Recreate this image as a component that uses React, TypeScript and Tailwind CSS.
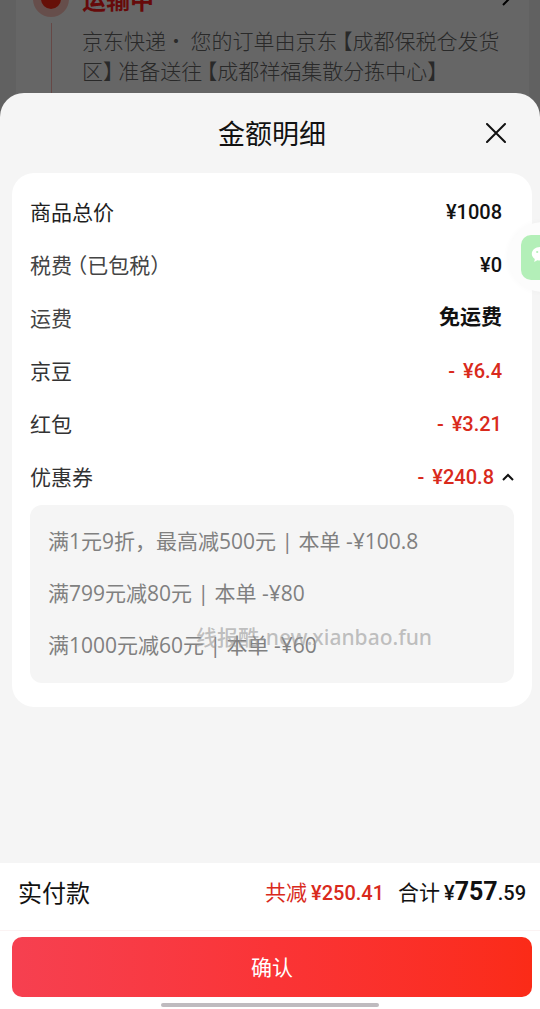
import React, { useState } from 'react';

interface PriceRow {
  label: string;
  value: string;
  discount?: boolean;
  labelClass: string;
  valueClass: string;
}

const NUM_FONT = "font-['Roboto','Noto_Sans_CJK_SC',sans-serif]";

const rows: PriceRow[] = [
  { label: '商品总价', value: '¥1008', labelClass: 'text-[#1f1f1f]', valueClass: 'text-xl font-medium text-[#111111]' },
  { label: '税费 （已包税）', value: '¥0', labelClass: 'text-[#444444]', valueClass: 'text-xl font-medium text-[#111111]' },
  { label: '运费', value: '免运费', labelClass: 'text-[#444444]', valueClass: 'text-[21px] font-bold text-[#111111]' },
  { label: '京豆', value: '¥6.4', discount: true, labelClass: 'text-[#333333]', valueClass: 'text-xl font-medium text-[#d92a1c]' },
  { label: '红包', value: '¥3.21', discount: true, labelClass: 'text-[#333333]', valueClass: 'text-xl font-medium text-[#d92a1c]' },
];

const coupons: string[] = [
  '满1元9折，最高减500元 | 本单 -¥100.8',
  '满799元减80元 | 本单 -¥80',
  '满1000元减60元 | 本单 -¥60',
];

// Order page behind the sheet
const ShippingStatus: React.FC = () => (
  <div className="relative bg-[#f3f3f3] pl-4 pr-[11px]">
    <div className="flex bg-white pl-[17px] pr-4">
      <div className="flex w-9 shrink-0 flex-col items-center">
        <span className="-mt-[19px] flex size-9 shrink-0 items-center justify-center rounded-full bg-[#ffc4bb]">
          <span className="size-5 rounded-full bg-[#ff2a14]" />
        </span>
        <span className="mt-1.5 w-px flex-1 bg-[#ffb5b0]" />
      </div>
      <div className="-mt-[17px] flex-1 pb-8 pl-[13px]">
        <div className="flex items-center justify-between">
          <h2 className="text-2xl leading-8 font-bold text-[#ff1a1a]">运输中</h2>
          <svg width="8" height="14" viewBox="0 0 8 14" fill="none" stroke="#000" strokeWidth="2" className="mr-[3px]">
            <path d="M1 1l6 6-6 6" />
          </svg>
        </div>
        <p className="mt-[10px] text-[21px] leading-[30px] font-light text-[#666666] [font-feature-settings:'halt']">
          京东快递 ·&nbsp; 您的订单由京东 【成都保税仓发货区】 准备送往 【成都祥福集散分拣中心】
        </p>
      </div>
    </div>
    <div className="absolute inset-0 bg-black/60" />
  </div>
);

const WechatBubble: React.FC = () => (
  <button
    type="button"
    aria-label="微信"
    className="absolute top-[222px] -right-[38px] flex size-[70px] items-center justify-center rounded-full bg-[#fcfcfc] shadow-[0_0_6px_rgba(0,0,0,0.03)]"
  >
    <span className="flex size-[45px] items-center justify-center rounded-[10px] bg-[#b3efb8]">
      <svg width="24" height="24" viewBox="0 0 24 24" fill="#fff">
        <path d="M9 2C4.3 2 .8 5 .8 8.800c0 2.100 1.200 4 3 5.300L3.200 17l3.100-1.700c.9.200 1.800.3 2.700.3 4.700 0 8.300-3 8.300-6.800S13.700 2 9 2z" />
        <path d="M16 9.500c-3.700 0-6.600 2.500-6.600 5.600s2.900 5.600 6.600 5.600c.8 0 1.600-.1 2.300-.3l2.400 1.300-.5-2.200c1.500-1 2.400-2.600 2.400-4.400 0-3.100-2.900-5.600-6.600-5.600z" />
        <circle cx="6.200" cy="7" r="1.100" fill="#b3efb8" />
        <circle cx="11.800" cy="7" r="1.100" fill="#b3efb8" />
      </svg>
    </span>
  </button>
);

const App: React.FC = () => {
  const [open, setOpen] = useState(true);

  return (
    <div className="relative flex min-h-screen flex-col overflow-hidden bg-[#f5f5f5] font-['Noto_Sans_CJK_SC',sans-serif]">
      <ShippingStatus />

      <div role="dialog" aria-labelledby="sheet-title" className="relative -mt-6 flex flex-1 flex-col rounded-t-3xl bg-[#f5f5f5]">
        <header className="flex h-20 items-center pr-8 pl-9">
          <span className="w-6" />
          <h1 id="sheet-title" className="flex-1 text-center text-[27px] text-[#111111]">金额明细</h1>
          <button type="button" aria-label="关闭" className="flex w-6 justify-center">
            <svg width="20" height="20" viewBox="0 0 20 20" fill="none" stroke="#111" strokeWidth="2" strokeLinecap="round">
              <path d="M1 1l18 18M19 1L1 19" />
            </svg>
          </button>
        </header>

        <section className="mr-2 ml-3 rounded-[22px] bg-white px-[18px] pt-3 pb-6">
          <dl>
            {rows.map((row) => (
              <div key={row.label} className="flex h-[53px] items-center justify-between pr-3">
                <dt className={`text-[21px] [font-feature-settings:'halt'] ${row.labelClass}`}>{row.label}</dt>
                <dd className={`flex gap-2 ${NUM_FONT} ${row.valueClass}`}>
                  {row.discount && <span>-</span>}
                  {row.value}
                </dd>
              </div>
            ))}
            <div className="flex h-[53px] items-center justify-between">
              <dt className="text-[21px] text-[#333333]">优惠券</dt>
              <dd>
                <button
                  type="button"
                  aria-expanded={open}
                  onClick={() => setOpen(!open)}
                  className={`flex items-center gap-2 text-xl font-medium text-[#d92a1c] ${NUM_FONT}`}
                >
                  <span>-</span>
                  ¥240.8
                  <svg width="12" height="8" viewBox="0 0 12 8" fill="none" stroke="#111" strokeWidth="2" className={open ? '' : 'rotate-180'}>
                    <path d="M1 7l5-5 5 5" />
                  </svg>
                </button>
              </dd>
            </div>
          </dl>
          {open && (
            <ul className="mt-0.5 rounded-xl bg-[#f5f5f5] px-[18px] py-[11px] font-['Open_Sans','Noto_Sans_CJK_SC',sans-serif]">
              {coupons.map((coupon) => (
                <li key={coupon} className="flex h-[52px] items-center text-[21px] text-[#808080]">{coupon}</li>
              ))}
            </ul>
          )}
        </section>

        <footer className="mt-auto bg-white">
          <div className="flex h-[68px] items-center justify-between border-b border-[#fbf3f3] pr-3.5 pb-2.5 pl-[18px]">
            <span className="text-2xl text-[#111111]">实付款</span>
            <div className={`flex items-baseline text-xl font-medium ${NUM_FONT}`}>
              <span className="text-[21px] font-normal text-[#d92a1c]">共减</span>
              <span className="ml-1 text-[#d92a1c]">¥250.41</span>
              <span className="ml-3.5 text-[21px] font-normal text-[#111111]">合计</span>
              <span className="ml-1 text-[#111111]">
                ¥<span className="text-[25px] font-bold">757</span>.59
              </span>
            </div>
          </div>
          <div className="pt-1.5 pr-2 pb-1 pl-3">
            <button
              type="button"
              className="h-[60px] w-full rounded-[10px] bg-linear-to-r from-[#f64050] via-[#fa3436] to-[#fb2b17] text-[21px] text-white"
            >
              确认
            </button>
          </div>
          <div className="mx-auto mt-0.5 mb-0.5 h-1 w-[218px] rounded-full bg-[#bfbbbf]" />
        </footer>
      </div>

      <WechatBubble />
      <div className="pointer-events-none absolute top-[622px] left-[196px] font-['Noto_Sans','Noto_Sans_CJK_SC',sans-serif] text-[21px] leading-[30px] font-medium whitespace-nowrap text-[#999999]/60">
        线报酷-new.xianbao.fun
      </div>
    </div>
  );
};

export default App;
